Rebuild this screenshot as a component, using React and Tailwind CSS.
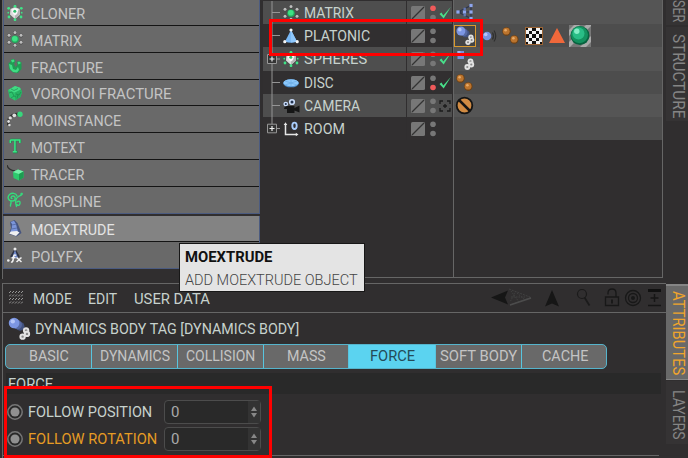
import { useLayoutEffect, useRef, useState } from "react";

function Fit({ w, vertical = false, className = "", children }) {
  const ref = useRef(null);
  const [scale, setScale] = useState(1);
  useLayoutEffect(() => {
    const el = ref.current;
    setScale(w / (vertical ? el.offsetHeight : el.offsetWidth));
  }, [w, vertical]);
  return (
    <span
      className={`block shrink-0 whitespace-nowrap ${className}`}
      style={vertical ? { height: w } : { width: w }}
    >
      <span
        ref={ref}
        className={vertical ? "inline-block origin-top [writing-mode:vertical-rl]" : "inline-block origin-left"}
        style={{ transform: vertical ? `scaleY(${scale})` : `scaleX(${scale})` }}
      >
        {children}
      </span>
    </span>
  );
}

const G = "#37d67c";

function Cloner() {
  return (
    <svg viewBox="0 0 16 16" className="size-4 shrink-0">
      <path d="M8 2 12.500 4 13 9.500 8 14 3 9.500 3.500 4z" fill="#dcdcdc" />
      <path d="M8 8v6l5-4.500L12.500 4z" fill="#b5b5b5" />
      <path d="M4.500 4.500 8 3l3.500 1.500L10 9 8 10.500 6 9z" fill="#f8f8f8" />
      <circle cx="7.800" cy="6.300" r="1.500" fill="#2fbf6c" />
      {[[8, 1.300], [1.700, 3.300], [14.300, 3.300], [2, 12], [14, 12], [8, 14.700]].map(([x, y]) => (
        <circle key={`${x}-${y}`} cx={x} cy={y} r="1.400" fill="#3fe487" />
      ))}
      {[[1.300, 7.700], [14.700, 7.700]].map(([x, y]) => (
        <circle key={x} cx={x} cy={y} r=".9" fill="#3fe487" />
      ))}
    </svg>
  );
}
function Matrix() {
  return (
    <svg viewBox="0 0 16 16" className="size-4 shrink-0">
      <circle cx="8" cy="8.200" r="3.800" fill="#22a75a" />
      <circle cx="7.800" cy="7.800" r="2.800" fill="#3ee184" />
      {[[8, 1.500], [2, 4.300], [14, 4.300], [2, 11.300], [14, 11.300], [8, 14.300]].map(([x, y]) => (
        <g key={`${x}-${y}`}>
          <circle cx={x} cy={y + 0.3} r="2" fill="#474747" />
          <circle cx={x} cy={y} r="1.500" fill="#bdbdbd" />
        </g>
      ))}
    </svg>
  );
}
function Fracture() {
  return (
    <svg viewBox="0 0 16 16" className="size-4 shrink-0">
      <path d="M1.500 5 3.500 4 4 1.500 7 1 8.500 3 7 6 8.500 9 10.500 7 9.500 4 12 3 14.500 4.500 14.500 11 11 15 6 14.500 2 11z" fill="#1f9d53" />
      <path d="M4 2 7 1.500 7.500 3.500 5 4.500zM2 6l3 1 1 4 3 1 2-3 1 3-2 2.500-4-.5-3-3zM10.500 4.500 12 3.500l2 1.500-2.500 1.500z" fill="#40dc84" />
    </svg>
  );
}
function Voronoi() {
  return (
    <svg viewBox="0 0 16 16" className="size-4 shrink-0">
      <path d="M8 1 13 2.800 15 7 13.500 12 8 15.500 2.500 12.500 1 5z" fill="#2cc26c" />
      <path d="M8 1 13 2.800 14 4.500 8 7.500 1.500 5z" fill="#40da83" />
      <path d="M8 7.500v8l5.500-3.500L15 7l-1-2.500z" fill="#27b162" />
      <path d="M4 4l3 1.500 4-2M2 8l3-1 2 4-3 2M9 9l3 1 2-3M10 13.500l1-3.500M7 11l2 1" fill="none" stroke="#168346" strokeWidth=".6" />
    </svg>
  );
}
function Moinstance() {
  return (
    <svg viewBox="0 0 16 16" className="size-4 shrink-0">
      <path d="M1.500 14Q0 3 13 3" fill="none" stroke="#363636" strokeWidth="3" />
      {[[2.400, 14, 1.200], [1.600, 10.500, 1.400], [3.200, 6.900, 1.700], [7.300, 4.300, 1.900]].map(([x, y, r]) => (
        <circle key={y} cx={x} cy={y} r={r} fill="#dedede" />
      ))}
      <circle cx="13" cy="3.300" r="2.700" fill={G} />
    </svg>
  );
}
function Motext() {
  return (
    <svg viewBox="0 0 16 16" className="size-4 shrink-0">
      <path d="M3.500 2h9.500v3M3.500 2v3M8.200 2v12M6 14h4.600" fill="none" stroke="#22864b" strokeWidth="2.400" />
      <path d="M3.300 2h9.500v3M3.300 2v3M7.900 2v11.800M5.800 13.800h4" fill="none" stroke="#3be587" strokeWidth="1.500" />
    </svg>
  );
}
function Tracer() {
  return (
    <svg viewBox="0 0 18 16" className="h-4 w-[18px] shrink-0">
      <path d="M0 0Q1 5 8 6" fill="none" stroke="#303030" strokeWidth="1.300" />
      <path d="M6 7 11 4.500 16.500 6.500V12.500L12 15.500 6.500 13z" fill="#2ccb6d" />
      <path d="M6 7 11 4.500 16.500 6.500 12 9z" fill="#74f0a8" />
      <path d="M12 9v6.500l4.500-3v-6z" fill="#1e9c52" />
    </svg>
  );
}
function Mospline() {
  return (
    <svg viewBox="0 0 16 16" className="size-4 shrink-0">
      <g fill="none" stroke="#35db7c" strokeWidth="1.400" strokeLinecap="round">
        <path d="M5 6.500C3.500 6.500 4 4 6 4c3 0 3 5-.5 5C1 9 0 5 2.500 2.500 5 .5 9 1 10 4" />
        <path d="M15 1.500c-.5 2.500-2 2-3.500 3-3 2-3.500 6-2 10M4 9c.5 3-1 4-.5 5M10 10c2-1.500 3.500-.5 3 1.500s-2 2.500-3 1" />
      </g>
      <circle cx="14.500" cy="2" r="1.200" fill={G} />
    </svg>
  );
}
function Moextrude() {
  return (
    <svg viewBox="0 0 16 17" className="h-[17px] w-4 shrink-0">
      <path d="M3 2 7.500 0 10.500 3 14.500 13 9.500 16.500 2 14 4 8z" fill="#46557f" />
      <path d="M3.500 2 7 .8 9 4 11 12 3 13 4.800 8 5 4z" fill="#7b95da" />
      <path d="M4.800 5 9 4.200M4.500 9l5.500-1" stroke="#52679f" strokeWidth=".8" />
      <path d="M2 13.500 4 11.500l6-.5 2.500 1.500L9 16z" fill="#f0f0f0" />
    </svg>
  );
}
function Polyfx() {
  return (
    <svg viewBox="0 0 16 16" className="size-4 shrink-0">
      <path d="M8 3 4 10M8 3l4 7" stroke="#2f3444" strokeWidth="2" />
      <path d="M8 3 5 11h6z" fill="#6f88c9" />
      <circle cx="8" cy="2" r="1.500" fill="#ececec" />
      <circle cx="1.300" cy="13.500" r="1.300" fill="#ececec" />
      <path d="M9 8.500Q7 7 6.500 10L6 13.500Q5.500 15.500 4 15M4.500 10.800H8.500M9.500 10.500l5 4.500M14.500 10.500l-5 4.500" fill="none" stroke="#f2f2f2" strokeWidth="1.500" />
    </svg>
  );
}
function Platonic() {
  return (
    <svg viewBox="0 0 16 16" className="size-4 shrink-0">
      <path d="M8 2 14 13.500Q8 16 2 13.500z" fill="#79b8f5" />
      <path d="M8 2 14 13.500 8 14.500z" fill="#8fc7fb" />
      {[[8, 2], [1.800, 13.700], [14.200, 13.700]].map(([x, y]) => (
        <circle key={x} cx={x} cy={y} r="1.600" fill="#f5f5f5" />
      ))}
    </svg>
  );
}
function Disc() {
  return (
    <svg viewBox="0 0 16 16" className="size-4 shrink-0">
      <ellipse cx="8" cy="8.300" rx="7.800" ry="4" fill="#4d8dca" />
      <ellipse cx="8" cy="7.800" rx="7.600" ry="3.500" fill="#8cc8fb" />
      <path d="M2 6l12 4M14 6 2 10M8 4.500v7" stroke="#66a7e1" strokeWidth=".6" />
    </svg>
  );
}
function Camera() {
  return (
    <svg viewBox="0 0 17 16" className="h-4 w-[17px] shrink-0">
      <path d="M2 8h9.500v2L16.500 7.500v7L11.500 12.500v2.500H4V11H1z" fill="#161616" />
      <circle cx="2.800" cy="6" r="1.700" fill="#253551" stroke="#c9dcfa" strokeWidth="1.300" />
      <circle cx="9" cy="4" r="2.300" fill="#253551" stroke="#c9dcfa" strokeWidth="1.600" />
    </svg>
  );
}
function Room() {
  return (
    <svg viewBox="0 0 16 16" className="size-4 shrink-0">
      <path d="M2.500 3v10.500h11" fill="none" stroke="#e6e6e6" strokeWidth="1.500" />
      <path d="M.7 4 2.500 1.300 4.300 4zM12.800 11.700 15.500 13.500 12.800 15.300z" fill="#e6e6e6" />
      <ellipse cx="11.500" cy="4.800" rx="2.200" ry="3.200" fill="none" stroke="#a9ccfa" strokeWidth="1.900" />
    </svg>
  );
}

function Cogs() {
  return (
    <g>
      {[[17.500, 12.300], [18.300, 15.500], [14.300, 18]].map(([x, y]) => (
        <g key={x}>
          <circle cx={x} cy={y} r="2.900" fill="#e2e2e2" />
          <circle cx={x} cy={y} r="1.100" fill="#8a8a8a" />
        </g>
      ))}
    </g>
  );
}
/* Dynamics body: blue balls with a pile of cogs. */
function BodyTag({ className }) {
  return (
    <svg viewBox="0 0 22 22" className={className}>
      <circle cx="12" cy="8.500" r="4" fill="#42527f" />
      <circle cx="9.500" cy="7" r="4.200" fill="#5669a2" />
      <circle cx="6.500" cy="5.500" r="4.900" fill="#7c96e2" />
      <circle cx="5.300" cy="4" r="2" fill="#b5c6f8" />
      <Cogs />
    </svg>
  );
}
function CollideTag() {
  return (
    <svg viewBox="0 0 22 22" className="size-[22px] shrink-0">
      <path d="M2.500 3H9v8H2.500z" fill="#7892dc" />
      <path d="M2.500 3h3v4h-3z" fill="#9db2f2" />
      <g transform="translate(-2 1)">
        <Cogs />
      </g>
    </svg>
  );
}
function ParticleTag() {
  return (
    <svg viewBox="0 0 22 22" className="size-[22px] shrink-0">
      <path d="M3 11h13M3 11 16 4.500M3 11l13 6.500M16 4.500v13" fill="none" stroke="#2d3650" strokeWidth="1.200" />
      {[[3, 11], [9.500, 11], [16, 11], [16, 4.500], [16, 17.500]].map(([x, y]) => (
        <path key={`${x}-${y}`} d={`M${x - 1.6} ${y - 1.6}h3.200v3.200h-3.200z`} fill="#8ea6ee" />
      ))}
      <path d="M8.500 6.800h2.400v2.400H8.500zM8.500 12.800h2.400v2.400H8.500z" fill="#6378b5" />
    </svg>
  );
}
function SoundTag() {
  return (
    <svg viewBox="0 0 22 22" className="size-[22px] shrink-0">
      <circle cx="9" cy="11" r="4.300" fill="#7892df" />
      <circle cx="7.700" cy="9.500" r="1.800" fill="#b3c4f9" />
      <path d="M14.500 7.500q2 3.500 0 7M16 5.500q3.500 5.500 0 11" fill="none" stroke="#2f2f2f" strokeWidth="1.200" />
    </svg>
  );
}
function Phong() {
  return (
    <svg viewBox="0 0 22 22" className="size-[22px] shrink-0">
      {[[6.500, 6.500], [14.300, 14.500]].map(([x, y]) => (
        <g key={x}>
          <circle cx={x} cy={y} r="4.200" fill="#6e4012" />
          <circle cx={x - 0.2} cy={y - 0.3} r="3.400" fill="#bb742e" />
          <circle cx={x - 0.9} cy={y - 1.2} r="1.300" fill="#e8ab68" />
        </g>
      ))}
    </svg>
  );
}
function Checker() {
  return (
    <svg viewBox="0 0 18 18" className="size-[18px] shrink-0" shapeRendering="crispEdges">
      <path d="M0 0h18v18H0z" fill="#9b6434" />
      <path d="M1 1h16v16H1z" fill="#f2f2f2" />
      <path d="M1 1h2v2H1zM7 1h4v3H7zM15 1h2v2h-2zM4 4h3v3H4zM11 4h3v3h-3zM1 7h3v4H1zM7 7h4v4H7zM14 7h3v4h-3zM4 11h3v3H4zM11 11h3v3h-3zM7 14h4v3H7zM1 15h2v2H1zM15 15h2v2h-2z" fill="#101010" />
    </svg>
  );
}
function Material() {
  return (
    <svg viewBox="0 0 22 22" className="size-[22px] shrink-0">
      <path d="M0 0h22v22H0z" fill="#777" />
      <path d="M0 5 5 0h6L0 11zM0 17 17 0h5v1L1 22H0zM11 22 22 11v6l-5 5z" fill="#aaa" />
      <circle cx="11" cy="10.500" r="9.500" fill="#08623f" />
      <circle cx="10.500" cy="9.800" r="8.500" fill="#14915f" />
      <circle cx="9.500" cy="8.500" r="6" fill="#29bd86" />
      <circle cx="7.800" cy="6.300" r="2.700" fill="#83edc5" />
    </svg>
  );
}
function Protection() {
  return (
    <svg viewBox="0 0 22 22" className="size-[22px] shrink-0">
      <circle cx="10.500" cy="10.500" r="7.800" fill="#d18b43" stroke="#151515" strokeWidth="1.800" />
      <path d="M5 5l11 11" stroke="#151515" strokeWidth="2.500" />
    </svg>
  );
}

const generators = [
  ["CLONER", 54, Cloner, "h-[26px]"],
  ["MATRIX", 51, Matrix, "h-[27px]"],
  ["FRACTURE", 72, Fracture, "h-[27px]"],
  ["VORONOI FRACTURE", 140, Voronoi, "h-[26px]"],
  ["MOINSTANCE", 90, Moinstance, "h-[27px]"],
  ["MOTEXT", 54, Motext, "h-[27px]"],
  ["TRACER", 53, Tracer, "h-[27px]"],
  ["MOSPLINE", 70, Mospline, "h-[27px]"],
];
const effectors = [
  ["MOEXTRUDE", 84, Moextrude, "h-[26px]", true],
  ["POLYFX", 52, Polyfx, "h-[27px]"],
];

function MenuRow({ item: [name, w, Icon, h, active], last }) {
  return (
    <div
      className={`flex items-center border-b pl-[3px] ${h} ${last ? "border-[#4b5b80]" : "border-[#141414]"} ${
        active ? "bg-[#838383] text-[#e4e4e4]" : "bg-[#696969] text-[#c4c4c4]"
      }`}
    >
      <span className="flex w-6 shrink-0">
        <Icon />
      </span>
      <Fit w={w} className="pt-[3px]">
        {name}
      </Fit>
    </div>
  );
}

const objects = [
  ["MATRIX", 50, Matrix, "h-[23px]", "red", "check"],
  ["PLATONIC", 66, Platonic, "h-[23px]", "", ""],
  ["SPHERES", 63, Cloner, "h-[24px]", "", "check", true],
  ["DISC", 30, Disc, "h-[23px]", "low", "check"],
  ["CAMERA", 56, Camera, "h-[23px]", "", "target"],
  ["ROOM", 41, Room, "h-[23px]", "", "", true],
];

function ObjectRow({ row: [name, w, Icon, h, dot, mark, expand], i }) {
  const bg = i % 2 ? "bg-[#312f30]" : "bg-[#4e4e4e]";
  return (
    <div className={`flex ${h}`}>
      <div className={`flex w-[143px] items-center text-[#c7d2cd] ${bg}`}>
        <svg viewBox="0 0 20 24" className="h-full w-5 shrink-0" preserveAspectRatio="none">
          <path d={i === 5 ? "M9 0v12h8" : "M9 0v24M9 12h8"} fill="none" stroke="#979797" />
          {expand && (
            <>
              <path d="M4.500 7.500h9v9h-9z" fill="#343434" stroke="#999" />
              <path d="M6.500 12h5M9 9.500v5" stroke="#eee" strokeWidth="1.200" />
            </>
          )}
        </svg>
        <span className="flex w-[21px] shrink-0">
          <Icon />
        </span>
        <Fit w={w}>{name}</Fit>
      </div>
      <div className={`ml-px flex w-[45px] items-center pl-1 ${bg}`}>
        <svg viewBox="0 0 14 14" className="size-3.5 shrink-0">
          <rect width="14" height="14" rx="1.500" fill="#777" />
          <path d="M1 13 13 1" stroke="#333" strokeWidth="1.200" />
        </svg>
        <svg viewBox="0 0 8 20" className="ml-1 h-5 w-2 shrink-0">
          <circle cx="4" cy="5.300" r="2.800" fill={dot === "red" ? "#f05a5a" : "#777"} />
          <circle cx="4" cy="14.500" r="2.800" fill={dot === "low" ? "#f05a5a" : "#777"} />
        </svg>
        {mark === "check" && (
          <svg viewBox="0 0 12 12" className="ml-0.5 size-3 shrink-0">
            <path d="M.5 7 2.500 5.500 4.300 8.500 11.800 0 4.700 11.500z" fill="#48e08a" />
          </svg>
        )}
        {mark === "target" && (
          <svg viewBox="0 0 12 12" className="ml-0.5 size-3 shrink-0">
            <path d="M1 4V1h3M8 1h3v3M11 8v3H8M4 11H1V8M4 6h4M6 4v4" fill="none" stroke="#1b1b1b" strokeWidth="1.300" />
          </svg>
        )}
      </div>
    </div>
  );
}

function TagRow({ h, odd, children }) {
  return <div className={`flex items-center ${h} ${odd ? "bg-[#4d4d4d]" : "bg-[#555]"}`}>{children}</div>;
}

const tabs = [
  ["BASIC", 40, "w-[86px]"],
  ["DYNAMICS", 70, "w-[86px]"],
  ["COLLISION", 69, "w-[86px]"],
  ["MASS", 39, "w-[85px]"],
  ["FORCE", 45, "w-[87px]"],
  ["SOFT BODY", 77, "w-[86px]"],
  ["CACHE", 46, "w-[86px]"],
];

function Param({ name, w, hot }) {
  return (
    <div className="flex h-[27px] items-center">
      <svg viewBox="0 0 18 18" className="size-[18px] shrink-0">
        <circle cx="9" cy="9" r="7.200" fill="#292929" stroke="#777" strokeWidth="1.500" />
        <circle cx="9" cy="9" r="4.500" fill="#909090" />
      </svg>
      <Fit w={w} className={`ml-1 pt-px ${hot ? "text-[#e69c24]" : "text-[#c7d2cd]"}`}>
        {name}
      </Fit>
      <div className={`${hot ? "ml-[7px]" : "ml-3"} flex h-6 w-[97px] items-center rounded-sm border border-[#4c4c4c] bg-[#292929] pl-1.5 text-[#aaa]`}>
        <Fit w={8} className="pt-px">
          0
        </Fit>
        <div className="ml-auto flex h-full w-3 items-center justify-center bg-[#333]">
          <svg viewBox="0 0 6 12" className="h-3 w-1.5">
            <path d="M3 .5 6 5H0zM3 11.500 0 7h6z" fill="#888" />
          </svg>
        </div>
      </div>
    </div>
  );
}

function ToolbarIcons() {
  return (
    <svg viewBox="0 0 172 24" className="h-6 w-[172px]" fill="none">
      <path d="M0 11.500 17 4.500 14 11.500 17 18.500z" fill="#161616" />
      <path d="M18 3 40 11.500 19 19" stroke="#414141" strokeDasharray="2 1" />
      <path d="M20 5l8 11M25 5l-6 11M26 7l7 6M20 11h14" stroke="#404040" strokeDasharray="1.500 1" />
      <path d="M19 19 40 12" stroke="#4c4c4c" strokeWidth="1.500" />
      <path d="M61 4 68 20.500 61 17.500 54 20.500z" fill="#161616" />
      <circle cx="91" cy="8" r="4.500" stroke="#1b1b1b" strokeWidth="1.200" />
      <path d="M93.500 11.500l5 8" stroke="#1b1b1b" strokeWidth="1.800" />
      <path d="M114.500 11h13v8.500h-13zM117 8.500V7q0-4 4-4t4 4v4" stroke="#181818" strokeWidth="1.300" />
      <path d="M121 13.500v4" stroke="#181818" strokeWidth="1.800" />
      <circle cx="142" cy="12" r="7.500" stroke="#181818" strokeWidth="1.300" />
      <circle cx="142" cy="12" r="4.500" stroke="#181818" strokeWidth="1.300" />
      <circle cx="142" cy="12" r="2" fill="#181818" />
      <path d="M157 4.500h13" stroke="#111" strokeWidth="3" />
      <path d="M159.500 12h8M163.500 8v8M157 19.500h13" stroke="#161616" strokeWidth="1.500" />
    </svg>
  );
}

function Sidebar() {
  return (
    <div className="flex w-[22px] shrink-0 flex-col bg-[#302e2f] text-[16px] leading-5 text-[#858585]">
      <div className="h-[25px] bg-[#353334] pl-0.5">
        <Fit w={22} vertical>
          SER
        </Fit>
      </div>
      <div className="mt-0.5 h-[94px] bg-[#353334] pt-[7px] pl-0.5">
        <Fit w={84} vertical>
          STRUCTURE
        </Fit>
      </div>
      <div className="mt-[163px] h-[96px] border-t-2 border-b border-[#858585] bg-[#696969] pt-[5px] pl-0.5 text-[#f0a52c]">
        <Fit w={84} vertical>
          ATTRIBUTES
        </Fit>
      </div>
      <div className="mt-px h-[63px] bg-[#353334] pt-[9px] pl-0.5">
        <Fit w={50} vertical>
          LAYERS
        </Fit>
      </div>
    </div>
  );
}

export default function App() {
  return (
    <div className="relative flex h-[458px] w-[688px] overflow-hidden bg-[#302e2f] font-['Roboto',sans-serif] text-[15px] leading-[18px]">
      <div className="flex w-[666px] shrink-0 flex-col">
        <div className="flex h-[283px] shrink-0">
          <div className="h-[279px] w-[3px] shrink-0 border-r border-[#666] bg-[#242424]" />
          <div className="w-[257px] shrink-0">
            <div className="border-r border-l border-[#4b5b80]">
              {generators.map((g, i) => (
                <MenuRow key={g[0]} item={g} last={i === 7} />
              ))}
            </div>
            <div className="mt-0.5 border-r border-l border-[#4b5b80]">
              {effectors.map((g, i) => (
                <MenuRow key={g[0]} item={g} last={i === 1} />
              ))}
            </div>
          </div>
          <div className="flex h-[278px] w-[403px] shrink-0 border-r border-b border-[#666] pl-[3px]">
            <div className="w-[189px] shrink-0 pt-px">
              {objects.map((row, i) => (
                <ObjectRow key={row[0]} row={row} i={i} />
              ))}
            </div>
            <div className="ml-px w-[209px] shrink-0 border-l border-[#666]">
              <TagRow h="h-6">
                <span className="ml-px flex">
                  <ParticleTag />
                </span>
              </TagRow>
              <TagRow h="h-[23px]" odd>
                <span className="flex size-[22px] shrink-0 items-center justify-center border border-[#d9992d] bg-[#444]">
                  <BodyTag className="size-5" />
                </span>
                <span className="ml-0.5 flex">
                  <SoundTag />
                </span>
                <Phong />
                <span className="ml-[3px] flex">
                  <Checker />
                </span>
                <svg viewBox="0 0 16 15" className="ml-[6px] h-[15px] w-4 shrink-0">
                  <path d="M8 0 16 15H0z" fill="#f0683b" />
                </svg>
                <span className="ml-1 flex">
                  <Material />
                </span>
              </TagRow>
              <TagRow h="h-6">
                <span className="ml-px flex">
                  <CollideTag />
                </span>
              </TagRow>
              <TagRow h="h-[23px]" odd>
                <Phong />
              </TagRow>
              <TagRow h="h-[23px]">
                <Protection />
              </TagRow>
              <TagRow h="h-[23px]" odd />
            </div>
          </div>
        </div>

        <div className="ml-0.5 flex h-[175px] flex-col border-t border-l border-[#666]">
          <div className="flex h-[29px] shrink-0 items-center border-b border-[#666] pl-[6px] text-[#c7d2cd]">
            <svg viewBox="0 0 14 14" className="-mt-0.5 size-3.5 shrink-0">
              <path d="M2 1 0 3M5 1 3 3M8 1 6 3M11 1 9 3M14 1 12 3M2 4.500 0 6.500M5 4.500l-2 2M8 4.500l-2 2M11 4.500l-2 2M14 4.500l-2 2M2 8l-2 2M5 8l-2 2M8 8l-2 2M11 8l-2 2M14 8l-2 2M2 11.500l-2 2M5 11.500l-2 2M8 11.500l-2 2M11 11.500l-2 2M14 11.500l-2 2" stroke="#999" />
            </svg>
            <Fit w={39} className="ml-2.5 pt-px">
              MODE
            </Fit>
            <Fit w={29} className="ml-4 pt-px">
              EDIT
            </Fit>
            <Fit w={76} className="ml-[17px] pt-px">
              USER DATA
            </Fit>
            <div className="mr-[3px] ml-auto">
              <ToolbarIcons />
            </div>
          </div>
          <div className="flex h-[31px] shrink-0 items-center pl-1 text-[#c7d2cd]">
            <BodyTag className="size-6 shrink-0" />
            <Fit w={264} className="ml-1 pt-px">
              DYNAMICS BODY TAG [DYNAMICS BODY]
            </Fit>
          </div>
          <div className="ml-0.5 flex h-[25px] w-[602px] shrink-0 overflow-hidden rounded-[5px] border border-[#55b4cc] bg-[#696969]">
            {tabs.map(([name, w, cls]) => (
              <div
                key={name}
                className={`flex shrink-0 items-center justify-center border-r border-[#58c5df] pb-0.5 last:border-r-0 ${cls} ${
                  name === "FORCE" ? "bg-[#5bd3f0] text-[#244c58]" : "text-[#c4c4c4]"
                }`}
              >
                <Fit w={w}>{name}</Fit>
              </div>
            ))}
          </div>
          <div className="mt-[4px] mr-[5px] ml-[3px] flex h-[21px] shrink-0 items-center bg-[#292929] pl-0.5 text-[#c7d2cd]">
            <Fit w={45} className="pt-px">
              FORCE
            </Fit>
          </div>
          <div className="mt-1 flex flex-col pl-[3px]">
            <Param name="FOLLOW POSITION" w={124} />
            <Param name="FOLLOW ROTATION" w={129} hot />
          </div>
          <div className="mt-[3px] mr-[7px] h-px shrink-0 bg-[#666]" />
        </div>
      </div>
      <Sidebar />

      <div className="absolute top-[243px] left-[179px] h-[49px] w-[186px] border border-[#171717] bg-[#e4e4e4] pt-1 pl-[5px]">
        <Fit w={87} className="font-bold text-[#111]">
          MOEXTRUDE
        </Fit>
        <Fit w={173} className="mt-[5px] font-light text-[#444]">
          ADD MOEXTRUDE OBJECT
        </Fit>
      </div>
      <div className="absolute top-[19px] left-[269px] h-[37px] w-[214px] border-[3.500px] border-[#ff0000]" />
      <div className="absolute top-[386px] left-1 h-[72px] w-[268px] border-3 border-[#ff0000]" />
    </div>
  );
}
